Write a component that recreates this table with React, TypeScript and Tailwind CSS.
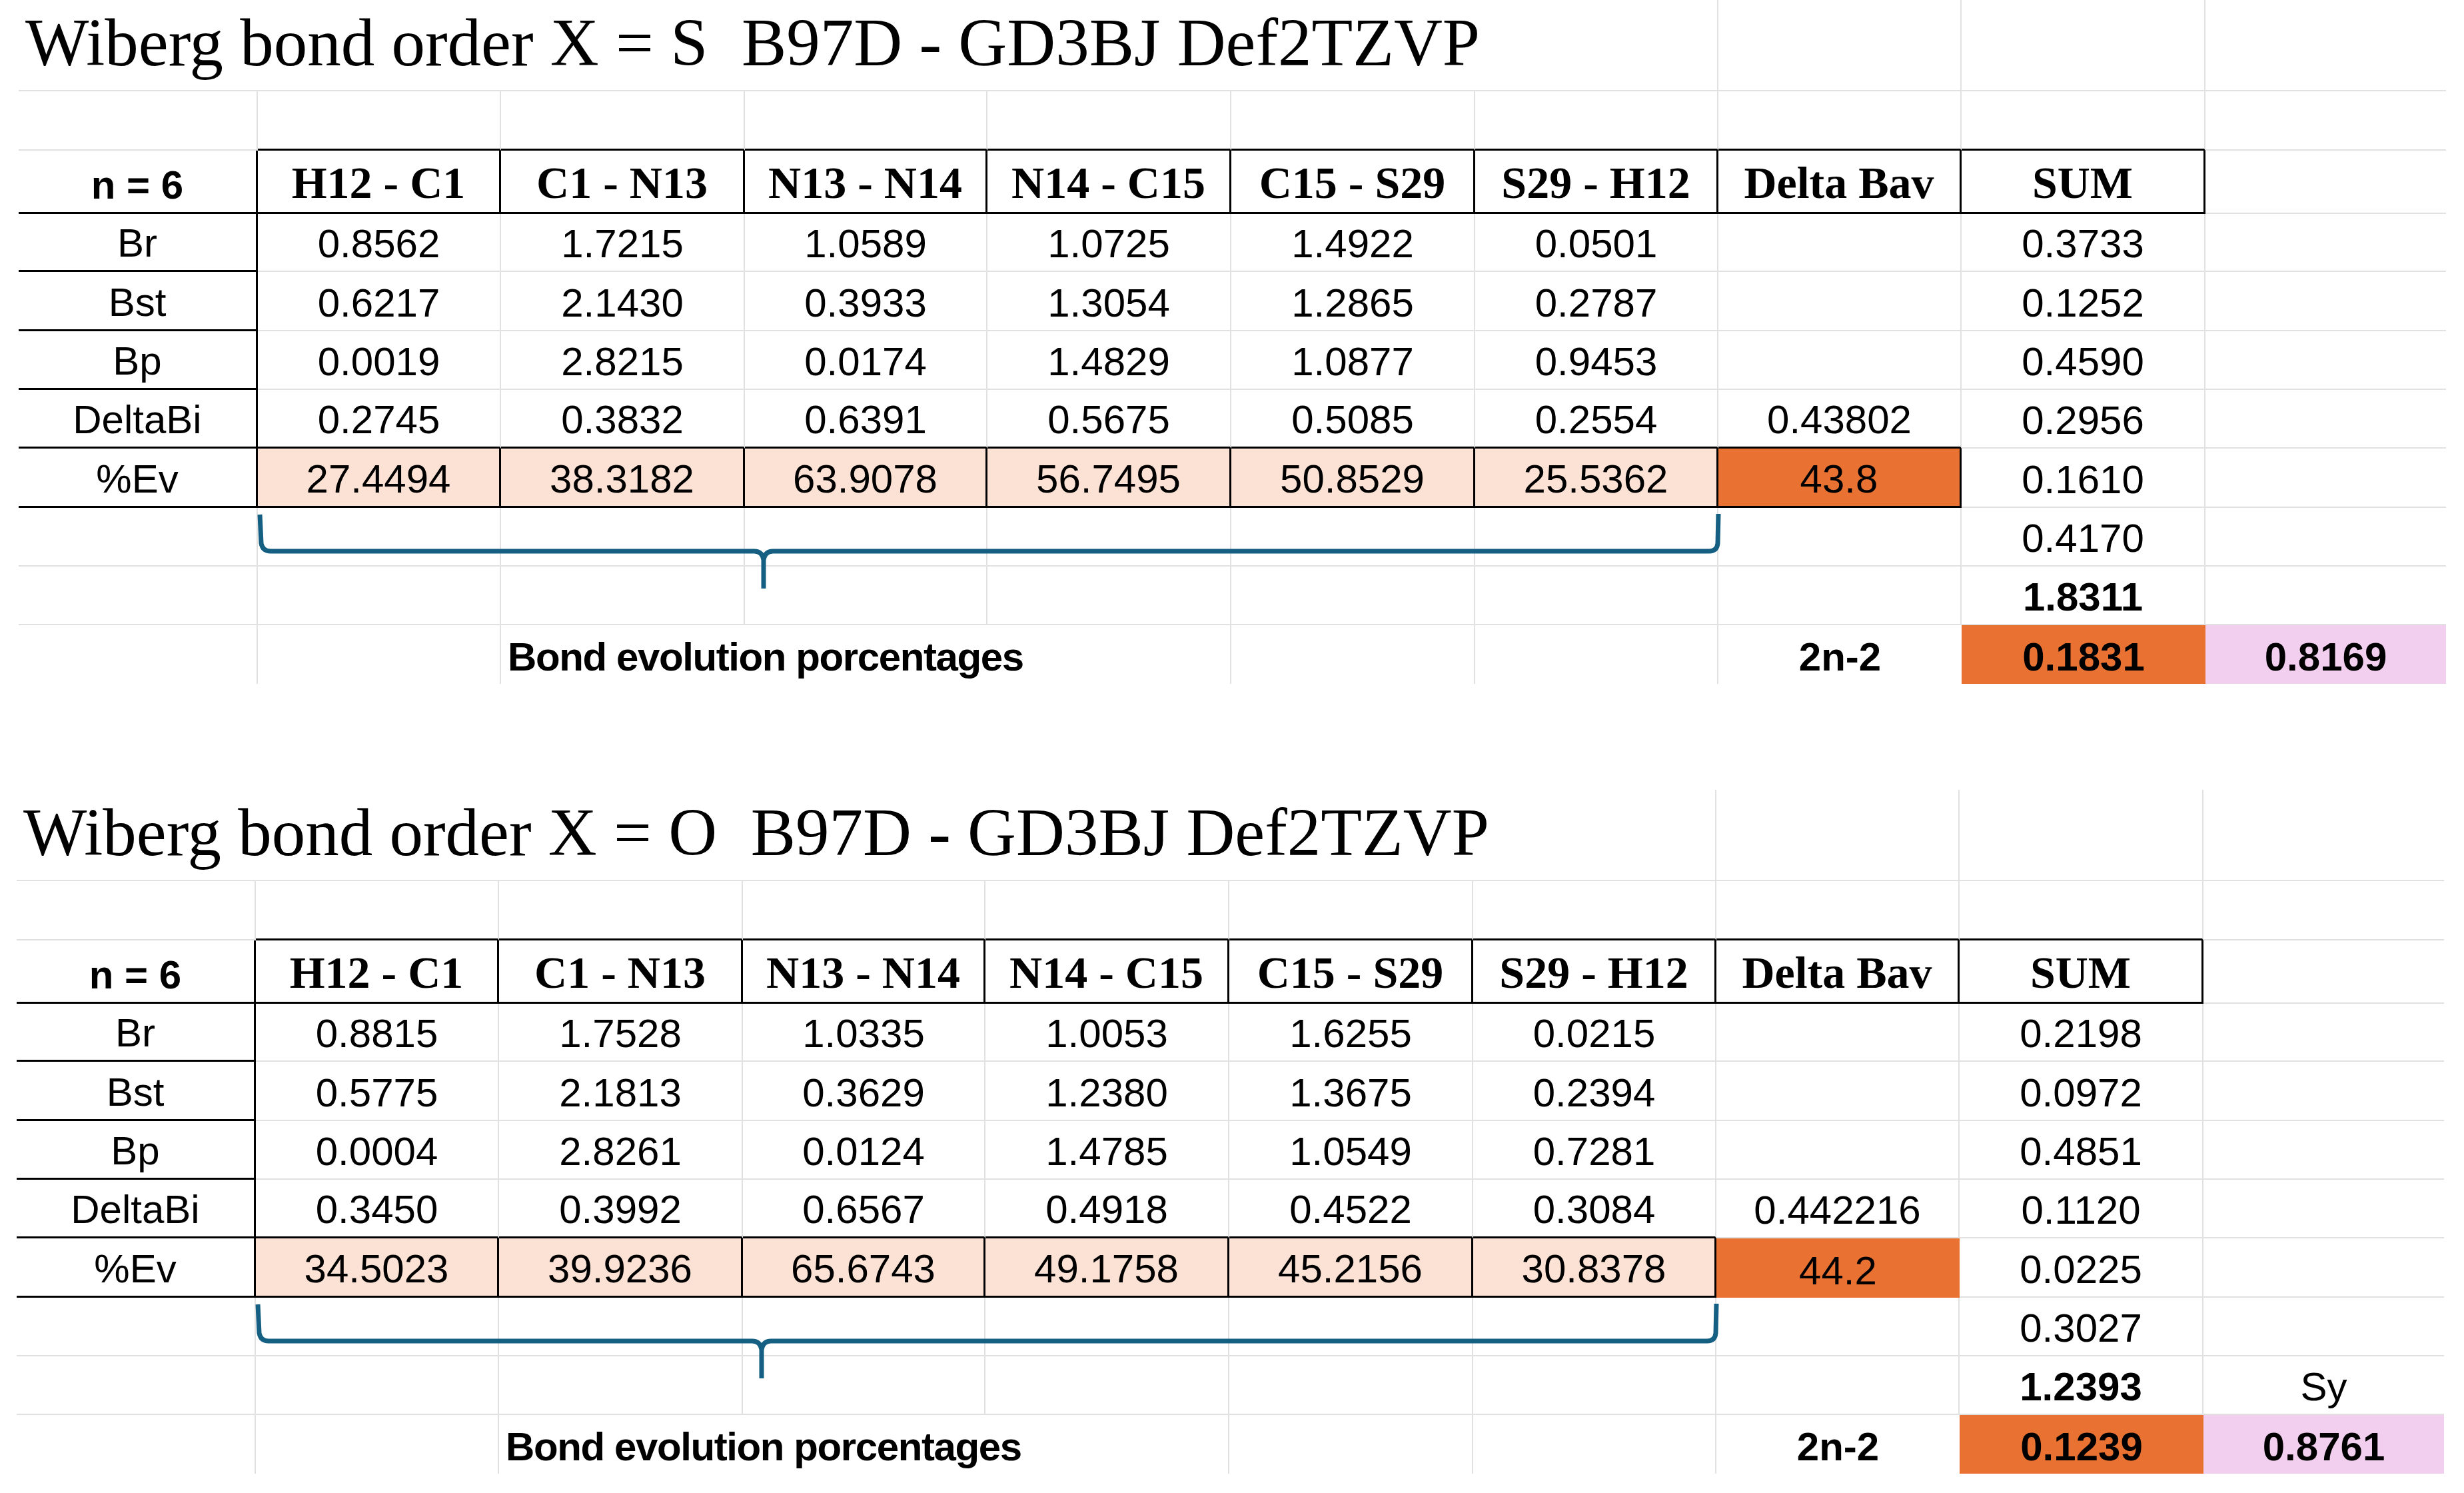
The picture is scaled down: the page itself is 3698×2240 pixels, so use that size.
type Edge = "g" | "k" | "n";

const R: Record<Edge, string> = {
  g: "border-r-2 border-r-[#e1e1e1]",
  k: "border-r-[3px] border-r-black",
  n: "",
};
const B: Record<Edge, string> = {
  g: "border-b-2 border-b-[#e1e1e1]",
  k: "border-b-[3px] border-b-black",
  n: "",
};

const sans = "font-['Liberation_Sans',Arial,sans-serif] text-[60px] leading-none text-black";
const serif = "font-['Liberation_Serif','Times_New_Roman',serif] font-bold text-[68px] leading-none text-black";

const headers = ["H12 - C1", "C1 - N13", "N13 - N14", "N14 - C15", "C15 - S29", "S29 - H12"];

type Sheet = {
  title: string;
  rows: { label: string; vals: string[]; bav: string; sum: string }[];
  ev: string[];
  evAvg: string;
  evSum: string;
  braceSum: string;
  total: string;
  sy: string;
  ratio: string;
  comp: string;
  hBox: boolean;
};

const sheets: Sheet[] = [
  {
    title: "Wiberg bond order X = S  B97D - GD3BJ Def2TZVP",
    rows: [
      { label: "Br", vals: ["0.8562", "1.7215", "1.0589", "1.0725", "1.4922", "0.0501"], bav: "", sum: "0.3733" },
      { label: "Bst", vals: ["0.6217", "2.1430", "0.3933", "1.3054", "1.2865", "0.2787"], bav: "", sum: "0.1252" },
      { label: "Bp", vals: ["0.0019", "2.8215", "0.0174", "1.4829", "1.0877", "0.9453"], bav: "", sum: "0.4590" },
      { label: "DeltaBi", vals: ["0.2745", "0.3832", "0.6391", "0.5675", "0.5085", "0.2554"], bav: "0.43802", sum: "0.2956" },
    ],
    ev: ["27.4494", "38.3182", "63.9078", "56.7495", "50.8529", "25.5362"],
    evAvg: "43.8",
    evSum: "0.1610",
    braceSum: "0.4170",
    total: "1.8311",
    sy: "",
    ratio: "0.1831",
    comp: "0.8169",
    hBox: true,
  },
  {
    title: "Wiberg bond order X = O  B97D - GD3BJ Def2TZVP",
    rows: [
      { label: "Br", vals: ["0.8815", "1.7528", "1.0335", "1.0053", "1.6255", "0.0215"], bav: "", sum: "0.2198" },
      { label: "Bst", vals: ["0.5775", "2.1813", "0.3629", "1.2380", "1.3675", "0.2394"], bav: "", sum: "0.0972" },
      { label: "Bp", vals: ["0.0004", "2.8261", "0.0124", "1.4785", "1.0549", "0.7281"], bav: "", sum: "0.4851" },
      { label: "DeltaBi", vals: ["0.3450", "0.3992", "0.6567", "0.4918", "0.4522", "0.3084"], bav: "0.442216", sum: "0.1120" },
    ],
    ev: ["34.5023", "39.9236", "65.6743", "49.1758", "45.2156", "30.8378"],
    evAvg: "44.2",
    evSum: "0.0225",
    braceSum: "0.3027",
    total: "1.2393",
    sy: "Sy",
    ratio: "0.1239",
    comp: "0.8761",
    hBox: false,
  },
];

function Cell({
  r = "g",
  b = "g",
  className = "",
  children,
}: {
  r?: Edge;
  b?: Edge;
  className?: string;
  children?: React.ReactNode;
}) {
  return (
    <div className={`flex items-end justify-center pb-[10px] ${R[r]} ${B[b]} ${className}`}>
      {children}
    </div>
  );
}

function Brace() {
  return (
    <svg
      className="absolute left-0 top-0 pointer-events-none"
      width={3643}
      height={1026}
      viewBox="0 0 3643 1026"
    >
      <path
        d="M362 772 L364 815 Q366 827 378 827 L1104 827 Q1116 827 1118 840 L1118 883 M1118 840 Q1120 827 1132 827 L2537 827 Q2549 827 2550 815 L2551 771"
        fill="none"
        stroke="#156082"
        strokeWidth={7}
      />
    </svg>
  );
}

function Table({ s, className }: { s: Sheet; className: string }) {
  return (
    <div className={`relative ${className}`}>
      <div className="grid grid-cols-[359px_365px_366px_364px_366px_366px_365px_365px_366px_361px] grid-rows-[137px_89px_95px_87px_89px_88px_88px_89px_88px_88px_88px]">
        {/* title row */}
        <div className="col-span-7 flex items-end pl-[10px] pb-[20px] border-r-2 border-r-[#e1e1e1] border-b-2 border-b-[#e1e1e1]">
          <span className="whitespace-pre font-['Liberation_Serif','Times_New_Roman',serif] text-[101px] leading-none text-black">
            {s.title}
          </span>
        </div>
        <Cell />
        <Cell />
        <Cell r="n" />

        {/* blank row */}
        <Cell />
        {headers.map((h) => (
          <Cell key={h} b="k" />
        ))}
        <Cell b="k" />
        <Cell b="k" />
        <Cell r="n" />

        {/* header */}
        <Cell r="k" b="k">
          <span className={`${sans} font-bold text-[57px]`}>n = 6</span>
        </Cell>
        {headers.map((h) => (
          <Cell key={h} r="k" b="k">
            <span className={`${serif} whitespace-pre`}>{h}</span>
          </Cell>
        ))}
        <Cell r="k" b="k">
          <span className={serif}>Delta Bav</span>
        </Cell>
        <Cell r="k" b="k">
          <span className={serif}>SUM</span>
        </Cell>
        <Cell r="n" />

        {/* data rows */}
        {s.rows.map((row, i) => {
          const last = i === s.rows.length - 1;
          return [
            <Cell key={row.label + "a"} r="k" b="k">
              <span className={sans}>{row.label}</span>
            </Cell>,
            ...row.vals.map((v, j) => (
              <Cell key={row.label + j} b={last ? "k" : "g"}>
                <span className={sans}>{v}</span>
              </Cell>
            )),
            <Cell key={row.label + "h"} b={last && s.hBox ? "k" : "g"}>
              <span className={sans}>{row.bav}</span>
            </Cell>,
            <Cell key={row.label + "i"}>
              <span className={sans}>{row.sum}</span>
            </Cell>,
            <Cell key={row.label + "j"} r="n" />,
          ];
        })}

        {/* %Ev row */}
        <Cell r="k" b="k">
          <span className={sans}>%Ev</span>
        </Cell>
        {s.ev.map((v, j) => (
          <Cell key={"ev" + j} r="k" b="k" className="bg-[#fbe2d5]">
            <span className={sans}>{v}</span>
          </Cell>
        ))}
        <Cell r={s.hBox ? "k" : "n"} b={s.hBox ? "k" : "n"} className="bg-[#e97132]">
          <span className={sans}>{s.evAvg}</span>
        </Cell>
        <Cell>
          <span className={sans}>{s.evSum}</span>
        </Cell>
        <Cell r="n" />

        {/* brace row */}
        <Cell />
        <Cell />
        <Cell />
        <Cell />
        <Cell />
        <Cell />
        <Cell />
        <Cell />
        <Cell>
          <span className={sans}>{s.braceSum}</span>
        </Cell>
        <Cell r="n" />

        {/* total row */}
        <Cell />
        <Cell />
        <Cell />
        <Cell />
        <Cell />
        <Cell />
        <Cell />
        <Cell />
        <Cell>
          <span className={`${sans} font-bold`}>{s.total}</span>
        </Cell>
        <Cell r="n">
          <span className={sans}>{s.sy}</span>
        </Cell>

        {/* bottom row */}
        <Cell b="n" />
        <Cell b="n" />
        <Cell b="n" className="col-span-3 justify-start pl-[10px]">
          <span className={`${sans} font-bold text-[57px] tracking-[-1.4px] whitespace-pre`}>
            Bond evolution porcentages
          </span>
        </Cell>
        <Cell b="n" />
        <Cell b="n" />
        <Cell r="n" b="n">
          <span className={`${sans} font-bold`}>2n-2</span>
        </Cell>
        <Cell r="n" b="n" className="bg-[#e97132]">
          <span className={`${sans} font-bold`}>{s.ratio}</span>
        </Cell>
        <Cell r="n" b="n" className="bg-[#f2ceef]">
          <span className={`${sans} font-bold`}>{s.comp}</span>
        </Cell>
      </div>
      <Brace />
    </div>
  );
}

export default function App() {
  return (
    <div className="w-[3698px] h-[2240px] bg-white overflow-hidden">
      <Table s={sheets[0]} className="ml-[28px]" />
      <Table s={sheets[1]} className="ml-[25px] mt-[159px]" />
    </div>
  );
}
